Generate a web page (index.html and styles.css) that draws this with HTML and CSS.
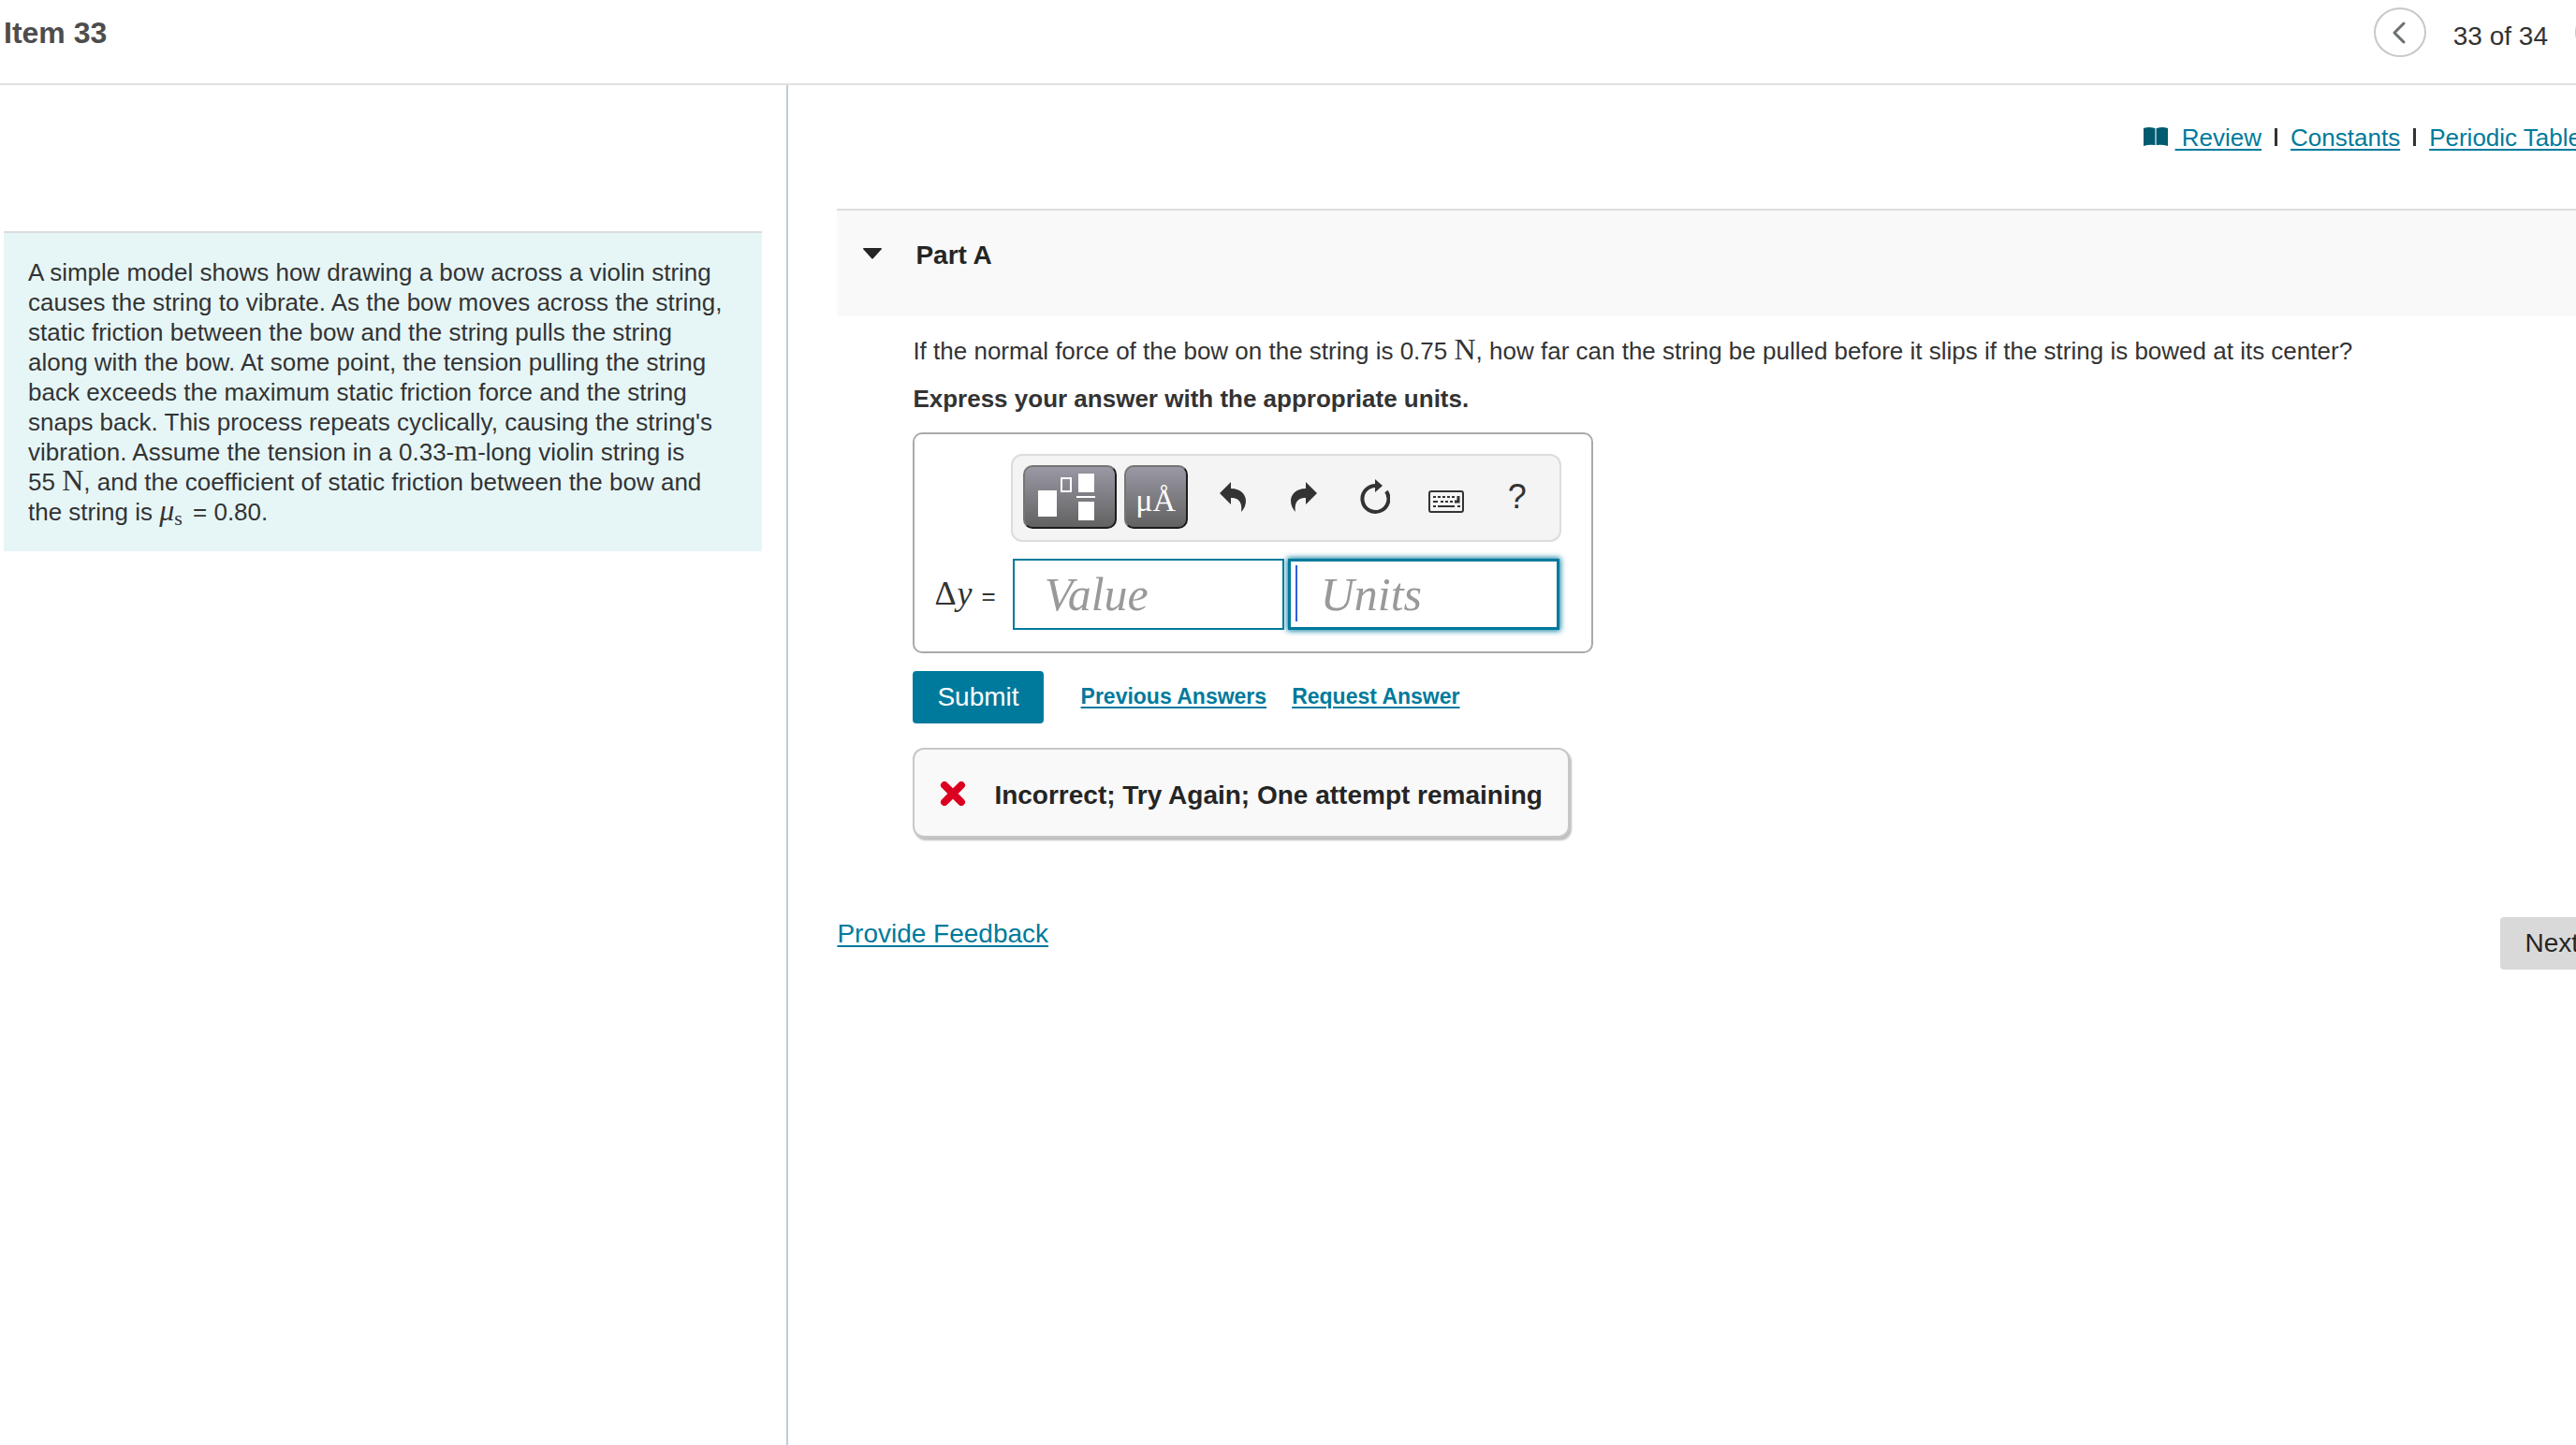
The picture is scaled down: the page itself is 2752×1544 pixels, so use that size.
FILE: index.html
```html
<!DOCTYPE html>
<html lang="en">
<head>
  <meta charset="UTF-8">
  <meta name="viewport" content="width=device-width, initial-scale=1.0">
  <title>Item 33</title>
  <link rel="stylesheet" href="styles.css">
</head>
<body>
  <div class="page">
    <header class="item-header">
      <h1>Item 33</h1>
      <nav class="pager">
        <button class="pager-btn" aria-label="Previous item">
          <svg width="16" height="26" viewBox="0 0 16 26"><path d="M13 3 3 13l10 10" fill="none" stroke="#6a7070" stroke-width="3" stroke-linecap="round" stroke-linejoin="round"/></svg>
        </button>
        <span class="pager-text">33 of 34</span>
        <button class="pager-btn" aria-label="Next item">
          <svg width="16" height="26" viewBox="0 0 16 26"><path d="m3 3 10 10L3 23" fill="none" stroke="#6a7070" stroke-width="3" stroke-linecap="round" stroke-linejoin="round"/></svg>
        </button>
      </nav>
    </header>

    <div class="columns">
      <aside class="side">
        <div class="intro">
          A simple model shows how drawing a bow across a violin string causes the string to vibrate. As the bow moves across the string, static friction between the bow and the string pulls the string along with the bow. At some point, the tension pulling the string back exceeds the maximum static friction force and the string snaps back. This process repeats cyclically, causing the string's vibration. Assume the tension in a 0.33-<span class="unit">m</span>-long violin string is 55&nbsp;<span class="unit">N</span>, and the coefficient of static friction between the bow and the string is <span class="unit"><i>μ</i><span class="sub">s</span></span> = 0.80.
        </div>
      </aside>

      <main class="content">
        <div class="resources">
          <svg class="book" width="26" height="20" viewBox="0 0 26 20"><path d="M0 1Q6-1 12 1V19Q6 18 0 20ZM26 1Q20-1 14 1V19Q20 18 26 20Z" fill="#005a70"/><path d="M12 1h2v18h-2z" fill="#8fb4be"/></svg>
          <a href="#">&nbsp;Review</a>
          <span class="bar"></span>
          <a href="#">Constants</a>
          <span class="bar"></span>
          <a href="#">Periodic Table</a>
        </div>

        <div class="part-header">
          <svg width="20" height="12" viewBox="0 0 20 12"><path d="M1 0h18q1 0 1 1l-9 10q-1 1-2 0L0 1q0-1 1-1z" fill="#252525"/></svg>
          <h2>Part A</h2>
        </div>

        <div class="part">
          <p class="question">If the normal force of the bow on the string is 0.75 <span class="unit">N</span>, how far can the string be pulled before it slips if the string is bowed at its center?</p>
          <p class="hint">Express your answer with the appropriate units.</p>

          <div class="answer">
            <div class="toolbar">
              <button class="tool wide" aria-label="Templates">
                <svg width="62" height="52" viewBox="0 0 62 52"><g fill="#fff"><path d="M0 19h20v28H0zM43 1h17v20H43zM41 25h20v2H41zM43 31h17v20H43z"/></g><path d="M25 6h10v14H25z" fill="none" stroke="#fff" stroke-width="2"/></svg>
              </button>
              <button class="tool units">μÅ</button>
              <div class="icons">
                <button class="icon" aria-label="Undo">
                  <svg width="28" height="32" viewBox="0 0 28 32"><path d="M0 12 12 0v7C23 7 28 14 28 20c0 5-2 9-5 12 1-7 0-15-11-15v7z" fill="#333"/></svg>
                </button>
                <button class="icon" aria-label="Redo">
                  <svg width="28" height="32" viewBox="0 0 28 32"><path d="M28 12 16 0v7C5 7 0 14 0 20c0 5 2 9 5 12-1-7 0-15 11-15v7z" fill="#333"/></svg>
                </button>
                <button class="icon" aria-label="Reset">
                  <svg width="32" height="38" viewBox="0 0 32 38"><path d="M18 7A14 14 0 1 0 28 13" fill="none" stroke="#333" stroke-width="4"/><path d="M16 0l8 7-8 7z" fill="#333"/></svg>
                </button>
                <button class="icon low" aria-label="Keyboard">
                  <svg width="38" height="24" viewBox="0 0 38 24"><rect x="1" y="1" width="36" height="22" rx="2" fill="none" stroke="#333" stroke-width="2"/><path d="M5 7h24M5 17h3M31 17h3" fill="none" stroke="#333" stroke-width="2" stroke-dasharray="3 2"/><path d="M5 12h5M13 12h3M18 12h3M23 12h3M10 17h18" fill="none" stroke="#333" stroke-width="2"/><path d="M32 6v6h-4" fill="none" stroke="#333" stroke-width="3"/></svg>
                </button>
                <button class="icon help" aria-label="Help">?</button>
              </div>
            </div>
            <label class="symbol" for="value">Δ<i>y</i> <span>=</span></label>
            <div class="fields">
              <input id="value" class="field" type="text" placeholder="Value">
              <div class="active">
                <input class="field" type="text" placeholder="Units" aria-label="Units">
              </div>
            </div>
          </div>

          <div class="actions">
            <button class="submit">Submit</button>
            <a href="#">Previous Answers</a>
            <a href="#">Request Answer</a>
          </div>

          <div class="feedback">
            <svg width="28" height="26" viewBox="0 0 28 26"><path d="m5 4 18 18M23 4 5 22" stroke="#db0020" stroke-width="8" stroke-linecap="round"/></svg>
            Incorrect; Try Again; One attempt remaining
          </div>
        </div>

        <div class="bottom">
          <a href="#">Provide Feedback</a>
          <button class="next">Next</button>
        </div>
      </main>
    </div>
  </div>
</body>
</html>
```
FILE: styles.css
```css
* {
  box-sizing: border-box;
}

body {
  margin: 0;
  overflow: hidden;
  font-family: "Liberation Sans", Arial, sans-serif;
  font-size: 26px;
  line-height: 32px;
  color: #333;
  background-color: #fff;
}

h1, h2, p {
  margin: 0;
}

button {
  font-family: inherit;
  cursor: pointer;
}

a {
  color: #007a9c;
  text-decoration-thickness: 2px;
  text-underline-offset: 3px;
}

/* the item is a little wider than the window */
.page {
  display: flex;
  flex-direction: column;
  min-height: 100vh;
  margin-right: -56px;
}

.item-header {
  display: flex;
  justify-content: space-between;
  align-items: flex-start;
  height: 91px;
  padding: 8px 1px 0 4px;
  border-bottom: 2px solid #e0e0e0;
}

.item-header h1 {
  margin-top: 11px;
  font-size: 32px;
  color: #4d4d4d;
}

.pager {
  display: flex;
}

.pager-btn {
  display: flex;
  align-items: center;
  justify-content: center;
  width: 56px;
  height: 53px;
  padding: 0 2px 0 0;
  border: 2px solid #c7c7c7;
  border-radius: 50%;
  background: #fff;
}

.pager-text {
  margin: 15px 29px 0;
  font-size: 28px;
}

.columns {
  display: flex;
  flex: 1;
}

.side {
  width: 30%;
  padding: 156px 26px 0 4px;
  border-right: 2px solid #b9cddd;
}

.intro {
  padding: 26px 30px 26px 26px;
  border-top: 2px solid #ddd;
  background-color: #e6f6f7;
}

.unit {
  font-family: "Liberation Serif", serif;
  font-size: 32px;
  line-height: 1px;
}

.sub {
  margin-right: 4px;
  font-size: 22px;
  vertical-align: -5px;
}

.content {
  flex: 1;
  padding-left: 52px;
}

.resources {
  display: flex;
  align-items: center;
  justify-content: flex-end;
  padding: 40px 50px 0 0;
}

.book {
  margin: 0 8px 2px 0;
}

.bar {
  width: 3px;
  height: 19px;
  margin: 0 14px 2px;
  background-color: #333;
}

.part-header {
  display: flex;
  align-items: flex-start;
  gap: 36px;
  height: 115px;
  margin-top: 60px;
  padding: 32px 28px 0;
  border-top: 2px solid #ddd;
  background-color: #f9f9f9;
}

.part-header svg {
  margin-top: 8px;
}

.part-header h2 {
  font-size: 28px;
  color: #252525;
}

.part {
  padding: 21px 0 0 81px;
}

.hint {
  margin-top: 19px;
  font-weight: bold;
}

.answer {
  display: grid;
  grid-template-columns: auto 1fr;
  align-items: center;
  row-gap: 18px;
  width: fit-content;
  margin-top: 20px;
  padding: 21px 32px 23px 21px;
  border: 2px solid #aaa;
  border-radius: 10px;
}

.toolbar {
  display: flex;
  grid-column: 2;
  align-items: flex-start;
  gap: 8px;
  height: 94px;
  padding: 10px 11px;
  border: 2px solid #dcdcdc;
  border-radius: 12px;
  background-color: #f4f4f4;
}

.tool {
  display: flex;
  align-items: center;
  justify-content: center;
  width: 68px;
  height: 68px;
  padding: 0;
  border: 2px solid;
  border-color: #757575 #1c1c1c #1c1c1c #757575;
  border-radius: 10px;
  background: linear-gradient(#9a98a4, #626262);
  color: #fff;
}

.tool.wide {
  width: 100px;
  padding-right: 6px;
}

.tool.units {
  padding-top: 8px;
  font-family: "Liberation Serif", serif;
  font-size: 34px;
}

.icons {
  display: flex;
  gap: 16px;
  height: 68px;
  padding-left: 10px;
}

.icon {
  display: flex;
  align-items: center;
  justify-content: center;
  width: 60px;
  padding: 0;
  border: 0;
  background: none;
}

.icon.low {
  padding-top: 10px;
}

.icon.help {
  font-size: 36px;
  color: #333;
}

.symbol {
  padding-right: 16px;
  font-family: "Liberation Serif", serif;
  font-size: 36px;
}

.symbol i {
  padding: 0 1px;
}

.symbol span {
  font-family: "Liberation Sans", Arial, sans-serif;
  font-size: 26px;
}

.fields {
  display: flex;
  gap: 4px;
  padding: 0 2px;
}

.field {
  display: block;
  width: 290px;
  height: 76px;
  padding: 0 0 0 32px;
  border: 2px solid #007a9c;
  outline: 0;
  font-family: "Liberation Serif", serif;
  font-size: 50px;
  font-style: italic;
}

.field::placeholder {
  color: #999;
  opacity: 1;
}

.active {
  position: relative;
}

.active .field {
  border-width: 3px;
  box-shadow: 0 0 6px 1px #007a9c;
}

/* text cursor */
.active::before {
  content: "";
  position: absolute;
  top: 7px;
  left: 8px;
  width: 2px;
  height: 60px;
  background-color: #2f5fd8;
}

.actions {
  display: flex;
  align-items: center;
  margin-top: 19px;
}

.actions a {
  margin-right: 27px;
  padding-bottom: 2px;
  font-size: 23px;
  font-weight: bold;
}

.submit, .next {
  height: 56px;
  padding: 0 26px;
  border: 0;
  border-radius: 4px;
  font-size: 28px;
}

.submit {
  margin-right: 40px;
  background-color: #007a9c;
  color: #fff;
}

.feedback {
  display: flex;
  align-items: center;
  gap: 30px;
  width: fit-content;
  height: 96px;
  margin-top: 26px;
  padding: 6px 27px 0;
  border: 2px solid #c7c7c7;
  border-radius: 12px;
  box-shadow: 2px 3px 2px #c0c0c0;
  background-color: #f9f9f9;
  font-size: 28px;
  font-weight: bold;
  color: #252525;
}

.feedback svg {
  margin-bottom: 4px;
}

.bottom {
  display: flex;
  align-items: flex-start;
  justify-content: space-between;
  margin-top: 85px;
  padding-right: 27px;
  font-size: 28px;
}

.bottom a {
  margin-top: 2px;
}

.next {
  background-color: #d9d9d9;
  color: #252525;
}
```
